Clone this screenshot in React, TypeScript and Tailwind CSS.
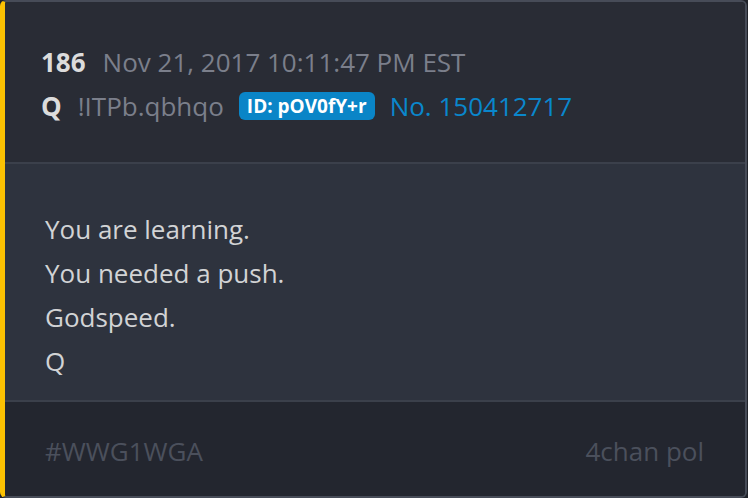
export default function App() {
  const lines = ["You are learning.", "You needed a push.", "Godspeed.", "Q"]

  return (
    <div className="w-[748px] h-[498px] bg-[#1f2229]" style={{ fontFamily: '"Open Sans", sans-serif' }}>
      <div className="w-[747px] h-[498px] flex flex-col rounded-md border-2 border-[#474c58] border-l-[5px] border-l-[#fbc102] overflow-hidden">
        {/* header */}
        <div className="bg-[#292c35] pl-[36px] pt-[38px] pb-[34px] border-b-2 border-[#3b404b] text-[26px] leading-[44px]">
          <div className="flex items-center">
            <span className="font-bold text-[#dcdcdc]">186</span>
            <span className="ml-[17px] text-[#7b7f8b]">Nov 21, 2017 10:11:47 PM EST</span>
          </div>
          <div className="flex items-center">
            <span className="font-bold text-[#dcdcdc]">Q</span>
            <span className="ml-[16px] text-[#7b7f8b]">!ITPb.qbhqo</span>
            <span className="ml-[15px] h-[28px] px-[8px] rounded-[6px] bg-[#0a85c7] text-white font-bold text-[19px] leading-[28px]">
              ID: pOV0fY+r
            </span>
            <span className="ml-[15px] text-[#0a87cc]">No. 150412717</span>
          </div>
        </div>

        {/* body */}
        <div className="bg-[#2e333e] pl-[40px] pt-[43px] pb-[17px] text-[26px] leading-[44px] text-[#d2d3d5]">
          {lines.map((line, i) => (
            <div key={i}>{line}</div>
          ))}
        </div>

        {/* footer */}
        <div className="flex-1 bg-[#23262f] border-t-2 border-[#3b404b] pl-[40px] pr-[41px] pt-[27px] flex justify-between text-[26px] leading-[44px] text-[#4b505c]">
          <span>#WWG1WGA</span>
          <span>4chan pol</span>
        </div>
      </div>
    </div>
  )
}
